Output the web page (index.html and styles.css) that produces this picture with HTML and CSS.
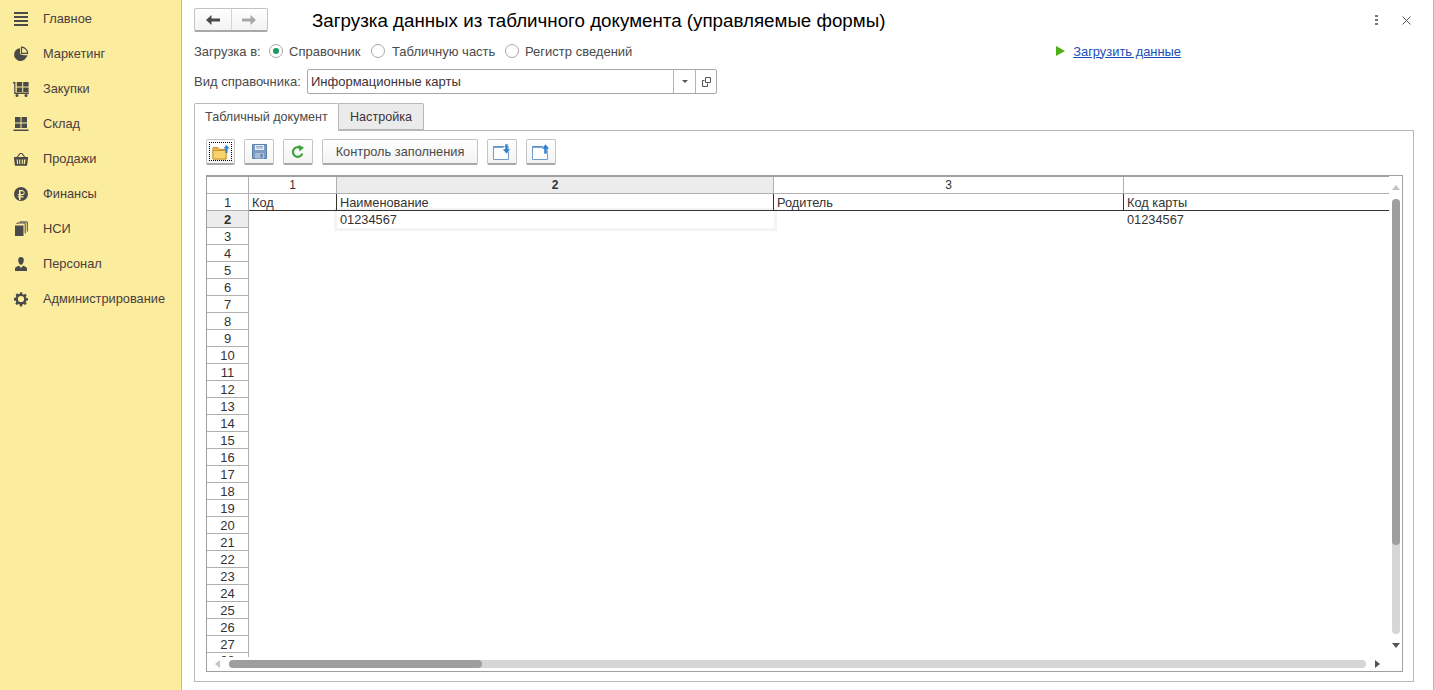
FILE: index.html
```html
<!DOCTYPE html>
<html lang="ru">
<head>
<meta charset="utf-8">
<title>Загрузка данных из табличного документа</title>
<link rel="stylesheet" href="styles.css">
</head>
<body>
<nav class="sidebar">
  <a class="nav-item"><svg class="nav-icon" viewBox="0 0 16 16"><path d="M1 1h14v2H1zM1 5h14v2H1zM1 9h14v2H1zM1 13h14v2H1z"/></svg><span>Главное</span></a>
  <a class="nav-item"><svg class="nav-icon" viewBox="0 0 16 16"><path d="M7 2.200A6.400 6.400 0 1 0 13.600 10.500L7 8z"/><path d="M8.500 1.200a6.400 6.400 0 0 1 6.200 6.200H8.500z" fill="none" stroke="#4a4a4a" stroke-width="1.200"/><path d="M8.600 9.200h5.900a6 6 0 0 1-.9 2z"/></svg><span>Маркетинг</span></a>
  <a class="nav-item"><svg class="nav-icon" viewBox="0 0 16 16"><path d="M0 1h2.400v10.500H16V13H1.200V2.400H0z"/><path d="M3.800 1h5.400v4.600H3.800zM10.200 1h5.400v4.600h-5.400zM3.800 6.500h5.400V11H3.800zM10.200 6.500h5.400V11h-5.400z"/><circle cx="4" cy="14.500" r="1.500"/><circle cx="13" cy="14.500" r="1.500"/></svg><span>Закупки</span></a>
  <a class="nav-item"><svg class="nav-icon" viewBox="0 0 16 16"><path d="M2 1h5.500v5.500H2zM8.500 1H14v5.500H8.500zM2 7.500h5.500V12H2zM8.500 7.500H14V12H8.500zM0.500 13.500h15V15H0.500z"/></svg><span>Склад</span></a>
  <a class="nav-item"><svg class="nav-icon" viewBox="0 0 16 16"><path d="M4 6.500 7 2.500h2l3 4" fill="none" stroke="#4a4a4a" stroke-width="1.200"/><path fill-rule="evenodd" d="M1 6h14v1.800l-1 7H2l-1-7zM3.500 8.500l.6 4.500h1.100l-.5-4.500zM6 8.500l.3 4.500h1l-.1-4.500zM8.800 8.500l-.1 4.500h1l.3-4.500zM11 8.500l-.3 4.500h1.200l.6-4.500z"/></svg><span>Продажи</span></a>
  <a class="nav-item"><svg class="nav-icon" viewBox="0 0 16 16"><path fill-rule="evenodd" d="M8 1a7 7 0 1 1 0 14A7 7 0 0 1 8 1zM6 4v4H4.800v1.300H6v1H4.800v1.300H6V14h1.600v-2.400h3v-1.300h-3v-1h1.900a2.700 2.700 0 0 0 0-5.300zM7.600 5.300h1.800a1.350 1.350 0 0 1 0 2.700H7.600z"/></svg><span>Финансы</span></a>
  <a class="nav-item"><svg class="nav-icon" viewBox="0 0 16 16"><path d="M2 4.500h8.500V15H2z"/><path d="M4 3V2h8.200V12.500M6.500 .9h7.800V10.500" fill="none" stroke="#4a4a4a" stroke-width="1"/></svg><span>НСИ</span></a>
  <a class="nav-item"><svg class="nav-icon" viewBox="0 0 16 16"><path d="M8 1c1.800 0 2.800 1.100 2.800 3C10.800 6.500 9.600 8.800 8 8.800S5.200 6.500 5.200 4C5.200 2.100 6.200 1 8 1z"/><path d="M2 15v-2.400c0-1.400 1.800-2.200 4-2.900L8 12l2-2.300c2.200.7 4 1.500 4 2.900V15z"/></svg><span>Персонал</span></a>
  <a class="nav-item"><svg class="nav-icon" viewBox="-1 -1 18 18"><path fill-rule="evenodd" d="M6.800 0.500h2.400l.4 2 1.400.6 1.700-1.100 1.700 1.700-1.100 1.700.6 1.400 2 .4v2.400l-2 .4-.6 1.400 1.100 1.700-1.700 1.700-1.700-1.100-1.400.6-.4 2H6.800l-.4-2-1.400-.6-1.700 1.100-1.700-1.700 1.100-1.700-.6-1.400-2-.4V6.800l2-.4.6-1.400L2 3.300 3.700 1.600l1.700 1.100 1.400-.6zM8 4.500a3.500 3.500 0 1 0 0 7 3.500 3.500 0 0 0 0-7z"/></svg><span>Администрирование</span></a>
</nav>

<main class="main">
  <header class="titlebar">
    <div class="navbtns">
      <button class="navbtn"><svg width="16" height="12" viewBox="0 0 16 12"><path d="M1 6l5.500-5v3.500H15v3H6.500V11z" fill="#4a4a4a"/></svg></button>
      <button class="navbtn"><svg width="16" height="12" viewBox="0 0 16 12"><path d="M15 6L9.500 1v3.500H1v3h8.500V11z" fill="#a8a8a8"/></svg></button>
    </div>
    <h1 class="title">Загрузка данных из табличного документа (управляемые формы)</h1>
    <div class="win-actions">
      <span class="dots"><i></i><i></i><i></i></span>
      <svg class="close" width="9" height="9" viewBox="0 0 9 9"><path d="M.5.500l8 8M8.500.500l-8 8" stroke="#555" stroke-width="1" fill="none"/></svg>
    </div>
  </header>

  <div class="radio-row">
    <span class="lbl lbl-load">Загрузка в:</span>
    <span class="radio on"></span><span class="lbl lbl-a">Справочник</span>
    <span class="radio"></span><span class="lbl lbl-b">Табличную часть</span>
    <span class="radio"></span><span class="lbl lbl-c">Регистр сведений</span>
    <span class="run"><i class="play"></i><a class="link">Загрузить данные</a></span>
  </div>

  <div class="field-row">
    <span class="lbl lbl-kind">Вид справочника:</span>
    <div class="input">
      <span class="input-text">Информационные карты</span>
      <span class="input-btn"><i class="caret"></i></span>
      <span class="input-btn open"><svg width="9" height="10" viewBox="0 0 9 10"><path d="M3.500.500h5v5h-5zM.500 3.500h2M.500 3.500v6h5v-3" fill="none" stroke="#555" stroke-width="1"/></svg></span>
    </div>
  </div>

  <div class="tabs">
    <div class="tab active">Табличный документ</div>
    <div class="tab">Настройка</div>
  </div>

  <section class="panel">
    <div class="toolbar">
      <button class="tbtn icon focus"><svg width="18" height="16" viewBox="0 0 18 16"><path d="M1 3.500h5l1.500 2H14V15H1z" fill="#e9b949" stroke="#c9992f"/><path d="M1 6.500h13V15H1z" fill="#f7d36c" stroke="#c9992f"/><path d="M13.500 9V4.500h-2L14.500 1l3 3.500h-2V9z" fill="#2f7fd0"/></svg></button>
      <button class="tbtn icon"><svg width="15" height="15" viewBox="0 0 15 15"><path d="M.500.500h14v14H.500z" fill="#7c9cc4" stroke="#5d7ea8"/><path d="M3 1h9v5H3z" fill="#e8eef6"/><path d="M4 2.500h7M4 4h7" stroke="#8aa5c8"/><path d="M3 9h9v5.500H3z" fill="#a9bdd6"/><path d="M8.500 10h2v3.500h-2z" fill="#5d7ea8"/></svg></button>
      <button class="tbtn icon"><svg width="14" height="14" viewBox="0 0 14 14"><path d="M11.300 8.500A4.800 4.800 0 1 1 8.800 2.700" fill="none" stroke="#3aa33a" stroke-width="2.200"/><path d="M7.500 0l5.500 2.600-4.500 3.900z" fill="#3aa33a"/></svg></button>
      <button class="tbtn wide">Контроль заполнения</button>
      <button class="tbtn icon"><svg width="18" height="18" viewBox="0 0 18 18"><path d="M.5 3.500h15v13H.5z" fill="#fff" stroke="#6f9ccb"/><path d="M.5 3h10v1.800H.5z" fill="#5e8fc4"/><path d="M12 1h3v5h2.500L13.500 11 9.500 6H12z" fill="#2f7fd0" stroke="#fff" stroke-width=".5"/></svg></button>
      <button class="tbtn icon"><svg width="18" height="18" viewBox="0 0 18 18"><path d="M.5 3.500h15v13H.5z" fill="#fff" stroke="#6f9ccb"/><path d="M.5 3h10v1.800H.5z" fill="#5e8fc4"/><path d="M12 11V6H9.500L13.500 1l4 5H15v5z" fill="#2f7fd0" stroke="#fff" stroke-width=".5"/></svg></button>
    </div>

    <div class="frame">
      <div class="frame-top">
        <div class="sheet">
          <div class="grid">
            <div class="rh corner"></div>
            <div class="ch">1</div><div class="ch sel">2</div><div class="ch">3</div><div class="ch last"></div>
            <div class="rh first">1</div>
            <div class="hc">Код</div><div class="hc">Наименование</div><div class="hc">Родитель</div><div class="hc end">Код карты</div>
            <div class="rh sel">2</div>
            <div class="dc"></div><div class="dc current">01234567</div><div class="dc"></div><div class="dc">01234567</div>
            <div class="rh">3</div><div class="rh">4</div><div class="rh">5</div><div class="rh">6</div><div class="rh">7</div>
            <div class="rh">8</div><div class="rh">9</div><div class="rh">10</div><div class="rh">11</div><div class="rh">12</div>
            <div class="rh">13</div><div class="rh">14</div><div class="rh">15</div><div class="rh">16</div><div class="rh">17</div>
            <div class="rh">18</div><div class="rh">19</div><div class="rh">20</div><div class="rh">21</div><div class="rh">22</div>
            <div class="rh">23</div><div class="rh">24</div><div class="rh">25</div><div class="rh">26</div><div class="rh">27</div>
            <div class="rh clip">28</div>
          </div>
        </div>
        <div class="vscroll">
          <div class="arrow-v"><i class="tri up"></i></div>
          <div class="vtrack"><div class="vthumb"></div></div>
          <div class="arrow-v"><i class="tri down"></i></div>
        </div>
      </div>
      <div class="hscroll">
        <div class="arrow-l"><i class="tri left"></i></div>
        <div class="htrack"><div class="hthumb"></div></div>
        <div class="arrow-r"><i class="tri right"></i></div>
      </div>
    </div>
  </section>
</main>
</body>
</html>
```
FILE: styles.css
```css
* { box-sizing: border-box; }
html, body { margin: 0; padding: 0; height: 690px; overflow: hidden; }
body {
  display: flex;
  background: #fff;
  font-family: "Liberation Sans", Arial, sans-serif;
  font-size: 13px;
  color: #4a4a4a;
}
.sidebar {
  width: 182px;
  flex: none;
  background: #fbec9e;
  border-right: 1px solid #c9ba78;
  padding-top: 1px;
}
.nav-item {
  display: flex;
  align-items: center;
  height: 35px;
  padding-left: 13px;
  color: #4a3d3f;
  font-size: 12.8px;
}
.nav-icon { width: 16px; height: 16px; margin-right: 14px; fill: #4a4a4a; flex: none; }

.main {
  flex: 1;
  min-width: 0;
  display: flex;
  flex-direction: column;
  padding: 8px 19px 8px 12px;
  border-right: 1px solid #c9ba78;
}
.titlebar { display: flex; align-items: center; height: 24px; }
.navbtns {
  display: flex;
  width: 74px;
  height: 24px;
  border: 1px solid #c4c4c4;
  border-bottom: 2px solid #a8a8a8;
  border-radius: 2px;
  background: linear-gradient(#fff, #f2f2f2);
}
.navbtn {
  flex: 1;
  padding: 0;
  border: 0;
  background: none;
  display: flex;
  align-items: center;
  justify-content: center;
}
.navbtn + .navbtn { border-left: 1px solid #d4d4d4; }
.title {
  margin: 2px 0 0 44px;
  font-size: 18.75px;
  font-weight: 400;
  color: #000;
  white-space: nowrap;
}
.win-actions { margin-left: auto; display: flex; align-items: center; gap: 24px; padding-right: 3px; }
.dots { display: flex; flex-direction: column; gap: 2px; }
.dots i { display: block; width: 3px; height: 2px; background: #777; }

.radio-row { display: flex; align-items: center; height: 20px; margin-top: 9px; }
.lbl { white-space: nowrap; }
.lbl-load { width: 75px; }
.lbl-a { width: 88px; padding-left: 6px; }
.lbl-b { width: 120px; padding-left: 7px; }
.lbl-c { padding-left: 6px; }
.radio {
  width: 14px;
  height: 14px;
  flex: none;
  border: 1px solid #a8a8a8;
  border-radius: 50%;
  background: #fff;
  display: flex;
  align-items: center;
  justify-content: center;
}
.radio.on::after { content: ""; width: 6px; height: 6px; border-radius: 50%; background: #1c9a5c; }
.run { margin-left: auto; display: flex; align-items: center; margin-right: 233px; font-size: 12.9px; }
.play {
  width: 0; height: 0;
  border-left: 9px solid #4fae16;
  border-top: 5px solid transparent;
  border-bottom: 5px solid transparent;
  margin-right: 8px;
}
.link { color: #1a50b8; text-decoration: underline; white-space: nowrap; }

.field-row { display: flex; align-items: center; height: 25px; margin-top: 8px; }
.lbl-kind { width: 113px; }
.input {
  width: 410px;
  height: 25px;
  display: flex;
  align-items: stretch;
  border: 1px solid #a8a8a8;
  border-radius: 2px;
  background: #fff;
}
.input-text { flex: 1; padding: 0 3px; line-height: 23px; color: #3f3238; }
.input-btn {
  width: 22px;
  border-left: 1px solid #b4b4b4;
  display: flex;
  align-items: center;
  justify-content: center;
}
.input-btn.open { width: 21px; }
.caret {
  width: 0; height: 0;
  border-top: 3px solid #555;
  border-left: 3px solid transparent;
  border-right: 3px solid transparent;
}

.tabs { display: flex; height: 27px; margin-top: 9px; position: relative; z-index: 1; font-size: 12.6px; }
.tab {
  height: 27px;
  line-height: 27px;
  padding: 0 11px 0 11px;
  width: 85px;
  white-space: nowrap;
  background: #ebebeb;
  border: 1px solid #b8b8b8;
  border-left: 0;
  border-radius: 0 2px 0 0;
  color: #3f3238;
}
.tab.active {
  width: 145px;
  height: 28px;
  padding: 0 10px;
  background: #fff;
  border-left: 1px solid #b8b8b8;
  border-bottom: 0;
  border-radius: 2px 2px 0 0;
  color: #4a4a4a;
}

.panel {
  flex: 1;
  min-height: 0;
  display: flex;
  flex-direction: column;
  border: 1px solid #b8b8b8;
  padding: 8px 10px 9px 11px;
}
.toolbar { display: flex; gap: 9px; height: 26px; margin-bottom: 10px; }
.tbtn {
  height: 26px;
  padding: 0;
  border: 1px solid #c4c4c4;
  border-bottom: 2px solid #a8a8a8;
  border-radius: 2px;
  background: linear-gradient(#fff, #f3f3f3);
  font: inherit;
  color: #4a4a4a;
  display: flex;
  align-items: center;
  justify-content: center;
}
.tbtn.icon { width: 30px; }
.tbtn.wide { width: 156px; font-size: 12.8px; }
.tbtn.focus { width: 29px; position: relative; }
.tbtn.focus::after {
  content: "";
  position: absolute;
  inset: 2px;
  border: 1px dotted #000;
}

.frame {
  flex: 1;
  min-height: 0;
  display: flex;
  flex-direction: column;
  border: 1px solid #a0a0a0;
}
.frame-top { flex: 1; min-height: 0; display: flex; }
.sheet { width: 1182px; flex: none; overflow: hidden; border-top: 1px solid #a0a0a0; color: #333; }
.grid {
  display: grid;
  grid-template-columns: 42px 88px 437px 350px 265px;
  grid-auto-rows: 17px;
  font-size: 12px;
  line-height: 17px;
}
.rh {
  grid-column: 1;
  text-align: center;
  border-right: 1px solid #b0b0b0;
  border-bottom: 1px solid #b0b0b0;
  font-size: 13px;
  line-height: 18px;
  color: #333;
}
.rh.clip { line-height: 15px; }
.rh.sel { background: #ececec; font-weight: 700; }
.ch {
  text-align: center;
  border-right: 1px solid #b0b0b0;
  border-bottom: 1px solid #b0b0b0;
  font-size: 12px;
  line-height: 17px;
}
.ch.sel { background: #ececec; font-weight: 700; }
.ch.last { border-right: 0; }
.hc {
  position: relative;
  z-index: 1;
  padding-left: 3px;
  border-right: 1px solid #333;
  border-bottom: 1px solid #333;
  white-space: nowrap;
  font-size: 12.8px;
  line-height: 18px;
}
.hc.end { border-right: 0; }
.dc { padding-left: 3px; white-space: nowrap; font-size: 12.8px; line-height: 18px; }
.dc.current { box-shadow: 0 0 0 3px #f4f4f4; }

.vscroll { flex: 1; display: flex; flex-direction: column; align-items: center; }
.arrow-v { height: 23px; flex: none; display: flex; align-items: center; justify-content: center; }
.vtrack { flex: 1; width: 8px; border-radius: 4px; background: #d6d6d6; }
.vthumb { height: 346px; border-radius: 4px; background: #9e9e9e; }
.hscroll { height: 14px; flex: none; display: flex; align-items: center; }
.arrow-l { width: 22px; flex: none; display: flex; justify-content: center; padding-right: 2px; }
.htrack { flex: 1; height: 8px; border-radius: 4px; background: #d6d6d6; }
.hthumb { width: 253px; height: 8px; border-radius: 4px; background: #9e9e9e; }
.arrow-r { width: 36px; flex: none; display: flex; padding-left: 9px; }
.tri { display: block; width: 0; height: 0; }
.tri.up { border: 4px solid transparent; border-top: 0; border-bottom: 5px solid #c4c4c4; }
.tri.down { border: 4px solid transparent; border-bottom: 0; border-top: 5px solid #555; }
.tri.left { border: 4px solid transparent; border-left: 0; border-right: 5px solid #c4c4c4; }
.tri.right { border: 4px solid transparent; border-right: 0; border-left: 5px solid #555; }
```
